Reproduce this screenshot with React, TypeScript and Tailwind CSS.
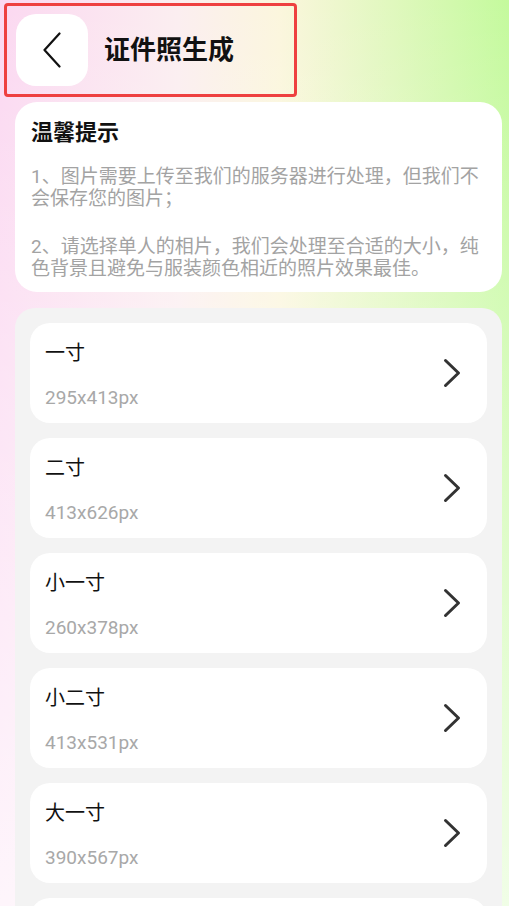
import { ReactNode } from "react";

const sizes = [
  { name: "一寸", px: "295x413px" },
  { name: "二寸", px: "413x626px" },
  { name: "小一寸", px: "260x378px" },
  { name: "小二寸", px: "413x531px" },
  { name: "大一寸", px: "390x567px" },
];

function ChevronRight() {
  return (
    <svg width="18" height="30" viewBox="0 0 18 30" fill="none">
      <path
        d="M2.5 2.5 L15.5 15 L2.5 27.5"
        stroke="#333333"
        strokeWidth="3"
        strokeLinecap="round"
        strokeLinejoin="round"
      />
    </svg>
  );
}

function Card({ children, className = "" }: { children: ReactNode; className?: string }) {
  return <div className={`rounded-[22px] bg-white ${className}`}>{children}</div>;
}

export default function App() {
  return (
    <div className="h-screen w-full overflow-hidden bg-[linear-gradient(to_bottom,rgba(255,255,255,0)_0%,rgba(255,255,255,0.75)_100%),linear-gradient(to_right,#fbd8f1_0%,#fbeef0_35%,#fbf6dd_55%,#c4fa9d_100%)] font-['Roboto','Noto_Sans_CJK_SC',sans-serif]">
      {/* header */}
      <div className="ml-[4px] mt-[3px] flex h-[94px] w-[293px] items-center gap-[16px] rounded-[4px] border-[3px] border-[#ee4040] pl-[9px]">
        <button className="flex h-[72px] w-[72px] items-center justify-center rounded-[20px] bg-white">
          <svg width="20" height="36" viewBox="0 0 20 36" fill="none">
            <path
              d="M17.5 1.5 L2.5 18 L17.5 34.5"
              stroke="#111111"
              strokeWidth="2.2"
              strokeLinecap="round"
              strokeLinejoin="round"
            />
          </svg>
        </button>
        <h1 className="text-[26px] font-bold leading-none text-[#111]">证件照生成</h1>
      </div>

      {/* tips */}
      <Card className="ml-[15px] mr-[7px] mt-[5px] px-[16px] pb-[12px] pt-[16px]">
        <div className="text-[22px] font-bold leading-[30px] text-[#111]">温馨提示</div>
        <p className="mt-[18px] text-[19px] leading-[22px] text-[#a3a3a3]">
          1、图片需要上传至我们的服务器进行处理，但我们不会保存您的图片；
        </p>
        <p className="mt-[26px] text-[19px] leading-[22px] text-[#a3a3a3]">
          2、请选择单人的相片，我们会处理至合适的大小，纯色背景且避免与服装颜色相近的照片效果最佳。
        </p>
      </Card>

      {/* sizes */}
      <div className="ml-[15px] mr-[7px] mt-[16px] flex flex-col gap-[15px] rounded-[20px] bg-[#f3f3f3] p-[15px]">
        {sizes.map((s) => (
          <div
            key={s.name}
            className="flex h-[100px] shrink-0 items-center justify-between rounded-[20px] bg-white pl-[15px] pr-[26px]"
          >
            <div className="flex flex-col self-start pt-[17px]">
              <span className="text-[20px] leading-[26px] text-[#111]">{s.name}</span>
              <span className="mt-[20px] text-[19px] leading-[24px] text-[#a8a8a8]">{s.px}</span>
            </div>
            <ChevronRight />
          </div>
        ))}
        {/* next row, scrolled below the fold */}
        <div className="h-[100px] shrink-0 rounded-[20px] bg-white" />
      </div>
    </div>
  );
}
